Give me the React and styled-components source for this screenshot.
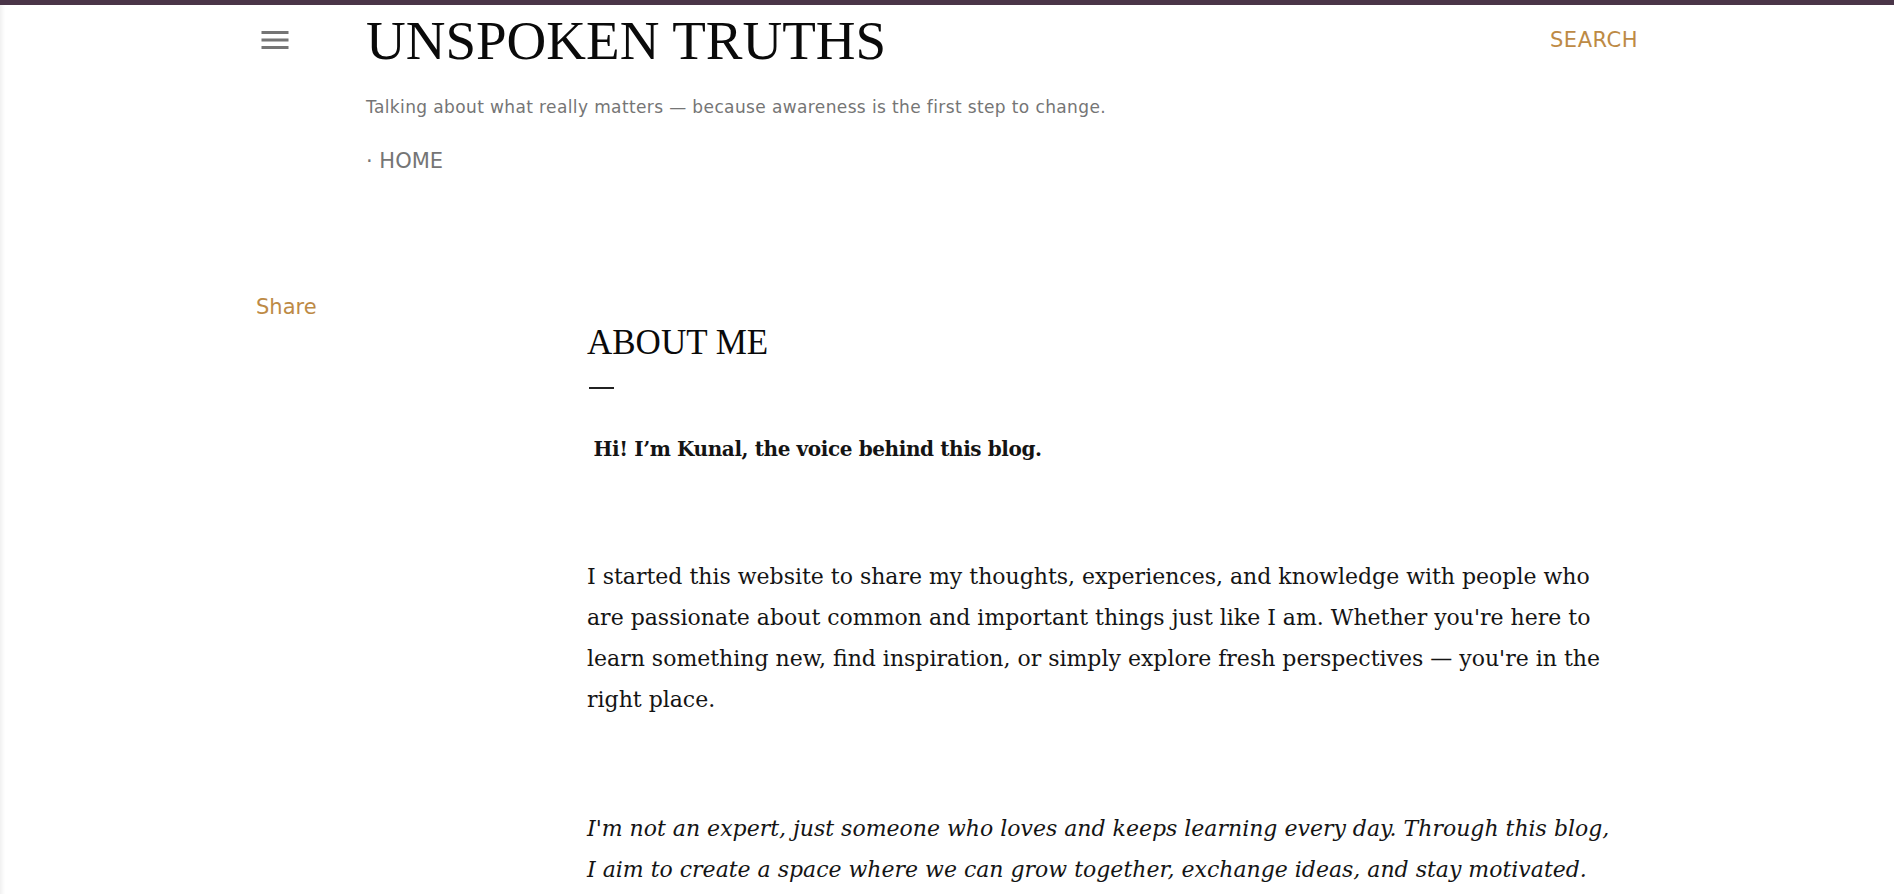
import React from "react";
import styled, { createGlobalStyle } from "styled-components";
import { MdMenu } from "react-icons/md";

const GlobalStyle = createGlobalStyle`
  html, body {
    margin: 0;
    padding: 0;
    overflow: hidden;
    background: #ffffff;
  }
  * {
    box-sizing: border-box;
  }
`;

const Page = styled.div`
  min-height: 100vh;
  background: #ffffff;
  box-shadow: inset 4px 0 4px -2px rgba(0, 0, 0, 0.07);
`;

const TopBar = styled.div`
  height: 5px;
  background: #4a3548;
`;

const Wrapper = styled.div`
  width: 1382px;
  margin: 0 auto;
`;

const Header = styled.header`
  display: grid;
  grid-template-columns: 110px 1fr auto;
  align-items: start;
  padding-top: 8px;
`;

const MenuButton = styled.button`
  display: flex;
  margin: 9px 0 0 1px;
  padding: 0;
  border: 0;
  background: none;
  color: #757575;
  cursor: pointer;
`;

const Branding = styled.div`
  display: flex;
  flex-direction: column;
`;

const Title = styled.h1`
  margin: 0;
  font-family: "Liberation Serif", "Times New Roman", serif;
  font-weight: 400;
  font-size: 55px;
  line-height: 1;
  color: #0a0a0a;
`;

const Tagline = styled.p`
  margin: 31px 0 0;
  font-family: "DejaVu Sans", sans-serif;
  font-size: 17px;
  letter-spacing: 0.38px;
  line-height: 1;
  color: #757575;
`;

const Nav = styled.nav`
  margin-top: 35px;
  font-family: "DejaVu Sans", sans-serif;
  font-size: 21px;
  line-height: 1;
  color: #757575;
  text-transform: uppercase;
`;

const SearchLink = styled.a`
  margin-top: 17px;
  font-family: "DejaVu Sans", sans-serif;
  font-size: 21px;
  letter-spacing: 0.5px;
  line-height: 1;
  color: #bd8a45;
  text-transform: uppercase;
  text-decoration: none;
`;

const Main = styled.main`
  display: grid;
  grid-template-columns: 331px 1025px;
  margin-top: 125px;
`;

const ShareLink = styled.a`
  align-self: start;
  font-family: "DejaVu Sans", sans-serif;
  font-size: 21px;
  line-height: 1;
  color: #bd8a45;
  text-decoration: none;
`;

const Article = styled.article`
  padding-top: 28px;
`;

const PostTitle = styled.h2`
  margin: 0;
  font-family: "Liberation Serif", "Times New Roman", serif;
  font-weight: 400;
  font-size: 35px;
  line-height: 1;
  color: #0a0a0a;
`;

const TitleRule = styled.div`
  width: 25px;
  height: 2px;
  margin: 27px 0 0 2px;
  background: #212121;
`;

const Body = styled.div`
  margin-top: 38px;
  font-family: "DejaVu Serif", serif;
  font-size: 22px;
  line-height: 41px;
  color: #141414;
`;

const Paragraph = styled.p`
  margin: 0 0 88px;
  font-style: ${(p) => (p.$italic ? "italic" : "normal")};
`;

const Lead = styled(Paragraph)`
  margin-bottom: 86px;
  padding-top: 2px;
  font-weight: 700;
  font-size: 20px;
  letter-spacing: -0.4px;
`;

export default function App() {
  return (
    <>
      <GlobalStyle />
      <Page>
        <TopBar />
        <Wrapper>
          <Header>
            <MenuButton aria-label="menu">
              <MdMenu size={36} />
            </MenuButton>
            <Branding>
              <Title>UNSPOKEN TRUTHS</Title>
              <Tagline>
                Talking about what really matters — because awareness is the first step to change.
              </Tagline>
              <Nav>· Home</Nav>
            </Branding>
            <SearchLink href="#">Search</SearchLink>
          </Header>

          <Main>
            <ShareLink href="#">Share</ShareLink>
            <Article>
              <PostTitle>ABOUT ME</PostTitle>
              <TitleRule />
              <Body>
                <Lead>&nbsp;Hi! I’m Kunal, the voice behind this blog.</Lead>
                <Paragraph>
                  I started this website to share my thoughts, experiences, and knowledge with people who
                  are passionate about common and important things just like I am. Whether you're here to
                  learn something new, find inspiration, or simply explore fresh perspectives — you're in
                  the right place.
                </Paragraph>
                <Paragraph $italic>
                  I'm not an expert, just someone who loves and keeps learning every day. Through this blog,
                  I aim to create a space where we can grow together, exchange ideas, and stay motivated.
                </Paragraph>
              </Body>
            </Article>
          </Main>
        </Wrapper>
      </Page>
    </>
  );
}
